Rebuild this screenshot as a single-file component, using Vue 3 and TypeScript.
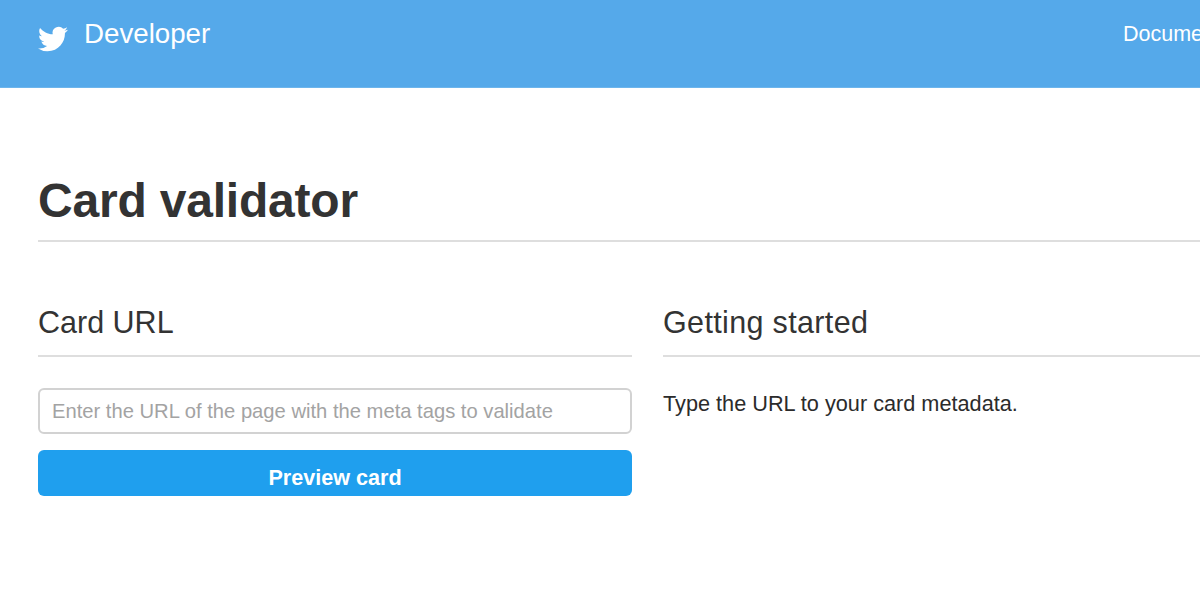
<script setup lang="ts">
const title: string = 'Card validator'
</script>

<template>
  <div class="viewport">
    <div class="page">
      <header class="topbar">
        <a class="brand">
          <svg class="bird" viewBox="0 0 24 24" aria-hidden="true">
            <path fill="#fff" d="M23.953 4.57a10 10 0 01-2.825.775 4.958 4.958 0 002.163-2.723c-.951.555-2.005.959-3.127 1.184a4.92 4.92 0 00-8.384 4.482C7.69 8.095 4.067 6.13 1.64 3.162a4.822 4.822 0 00-.666 2.475c0 1.71.87 3.213 2.188 4.096a4.904 4.904 0 01-2.228-.616v.06a4.923 4.923 0 003.946 4.827 4.996 4.996 0 01-2.212.085 4.936 4.936 0 004.604 3.417 9.867 9.867 0 01-6.102 2.105c-.39 0-.779-.023-1.17-.067a13.995 13.995 0 007.557 2.209c9.053 0 13.998-7.496 13.998-13.985 0-.21 0-.42-.015-.63A9.935 9.935 0 0024 4.59z"/>
          </svg>
          <span class="brand-name">Developer</span>
        </a>
        <nav class="nav">Documentation</nav>
      </header>
      <main class="content">
        <h1 class="title">{{ title }}</h1>
        <div class="columns">
          <section>
            <h2 class="heading">Card URL</h2>
            <input class="url" type="text" placeholder="Enter the URL of the page with the meta tags to validate" />
            <button class="preview" type="button">Preview card</button>
          </section>
          <section>
            <h2 class="heading heading-wide">Getting started</h2>
            <p class="hint">Type the URL to your card metadata.</p>
          </section>
        </div>
      </main>
    </div>
  </div>
</template>

<style>
html, body { margin: 0; background: #fff; overflow: hidden; }
</style>

<style scoped>
.viewport { width: 1200px; height: 613px; overflow: hidden; }
.page { width: 1400px; font-family: "Liberation Sans", Arial, sans-serif; color: #2f2f2f; }
.topbar {
  height: 87px; background: #55a9ea; border-bottom: 1px solid #6db5ec;
  display: flex; align-items: flex-start; padding-left: 38px; color: #fff; box-sizing: content-box;
}
.brand { display: flex; align-items: flex-start; width: 1085px; }
.bird { width: 30px; height: 30px; margin-top: 24px; }
.brand-name { font-size: 27.7px; line-height: 32px; margin: 18px 0 0 16px; }
.nav { font-size: 21.5px; line-height: 24px; margin-top: 22px; }
.content { padding: 0 38px; width: 1240px; }
.title {
  font-size: 48px; line-height: 56px; font-weight: 700; margin: 0; padding: 85px 0 11px;
  border-bottom: 2px solid #dedede; letter-spacing: -.2px; color: #333;
}
.columns { display: grid; grid-template-columns: 594px 594px; gap: 31px; }
.heading {
  font-size: 30.5px; line-height: 36px; font-weight: 400; margin: 0; padding: 62px 0 15px;
  border-bottom: 2px solid #dedede; color: #333;
}
.heading-wide { letter-spacing: .35px; }
.url {
  display: block; box-sizing: border-box; width: 594px; height: 46px; margin-top: 31px;
  border: 2px solid #d2d2d2; border-radius: 6px; padding: 0 12px; font: 20.2px "Liberation Sans", Arial, sans-serif;
  background: #fff; outline: none;
}
.url::placeholder { color: #a3a3a3; opacity: 1; }
.preview {
  display: block; width: 594px; height: 46px; margin-top: 16px; border: 0; border-radius: 6px;
  background: #1f9fee; color: #fff; font: 700 21.6px "Liberation Sans", Arial, sans-serif; padding: 10px 0 0;
}
.hint { font-size: 21.7px; line-height: 28px; margin: 33px 0 0; color: #2b2b2b; }
</style>
